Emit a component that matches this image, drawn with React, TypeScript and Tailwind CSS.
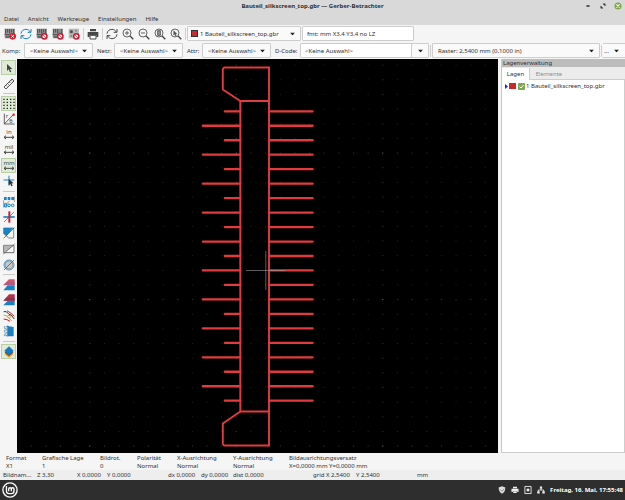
import type { ReactNode } from "react";

const RED = "#e23b3d";

type IconProps = { children: ReactNode; size?: string };

const Icon = ({ children, size = "size-3" }: IconProps) => (
  <svg viewBox="0 0 36 36" className={`${size} shrink-0 overflow-visible`} fill="none" aria-hidden="true">
    {children}
  </svg>
);

const Arrow = () => (
  <svg viewBox="0 0 10 6" className="pointer-events-none absolute right-[6px] top-1/2 h-[3px] w-[5px] -translate-y-1/2" aria-hidden="true">
    <path d="M0 0h10L5 6z" fill="#222" />
  </svg>
);

const ChipBody = () => (
  <>
    <path d="M2 2h31v29H2z" fill="#9a9a9a" />
    <path d="M5 3v14M11 3v11M17 3v14M23 3v11M29 3v14" stroke="#4a4a4a" strokeWidth="3" />
    <path d="M2 18h14v4H2zM5 25h11v4H5z" fill="#555" />
  </>
);

const NoEntry = () => (
  <>
    <circle cx="25" cy="25" r="8" fill="#fff" stroke="#d0142e" strokeWidth="4.5" />
    <path d="M19 19l12 12" stroke="#d0142e" strokeWidth="2" />
  </>
);

const ReloadArrows = ({ color }: { color: string }) => (
  <g stroke={color} strokeWidth="3">
    <path d="M3 17C4 8 11 4 18 4c6 0 10 3 13 8M33 19c-1 9-8 13-15 13-6 0-10-3-13-8" />
    <path d="M33 3v10H23M3 33V23h10" />
  </g>
);

const Lens = ({ children }: { children: ReactNode }) => (
  <g stroke="#444" strokeWidth="2.5">
    <circle cx="15" cy="15" r="12" />
    <path d="M24 24l10 10" strokeWidth="4" />
    {children}
  </g>
);

const fileTools = [
  {
    label: "Alle Lagen löschen",
    icon: (
      <>
        <ChipBody />
        <circle cx="26" cy="25" r="10" fill="#d3202f" />
        <path d="M22 21l8 8M30 21l-8 8" stroke="#fff" strokeWidth="3" />
      </>
    ),
  },
  { label: "Alle Lagen neu laden", icon: <ReloadArrows color="#1a81c4" /> },
  { label: "Gerber öffnen", icon: <><ChipBody /><NoEntry /></> },
  { label: "Gerber-Job öffnen", icon: <><ChipBody /><path d="M18 3h10v9H18z" fill="#888" /><NoEntry /></> },
  {
    label: "Bohrdatei öffnen",
    icon: (
      <>
        <path d="M2 2h31v29H2z" fill="#b9b9b9" />
        <circle cx="10" cy="11" r="5" fill="#555" />
        <circle cx="24" cy="8" r="3" fill="#888" />
        <circle cx="10" cy="24" r="3" fill="#888" />
        <NoEntry />
      </>
    ),
  },
];

const viewTools = [
  { label: "Ansicht aktualisieren", icon: <ReloadArrows color="#484848" /> },
  { label: "Vergrößern", icon: <Lens><path d="M9 15h12M15 9v12" /></Lens> },
  { label: "Verkleinern", icon: <Lens><path d="M9 15h12" /></Lens> },
  { label: "Zoom anpassen", icon: <Lens><path d="M11 8h8v14h-8z" fill="#999" /></Lens> },
  { label: "Auswahl zoomen", icon: <Lens><path d="M11 8l10 9-5 1 3 5-3 1-2-5-3 2z" fill="#555" strokeWidth="1" /></Lens> },
];

const Unit = ({ text }: { text: string }) => (
  <>
    <text x="18" y="16" textAnchor="middle" fontSize="18" fill="#444">{text}</text>
    <path d="M3 25h30M9 20l-6 5 6 5M27 20l6 5-6 5" stroke="#444" strokeWidth="3" />
  </>
);

const sideTools = [
  {
    height: "h-[31px]",
    tools: [
      { label: "Auswählen", on: true, icon: <path d="M12 6v21l5-5 4 9 4-2-4-8h7z" fill="#444" /> },
      {
        label: "Messen",
        icon: <path d="M3 27L27 3l6 6L9 33zM9 22l3 3M14 17l3 3M19 12l3 3M24 7l3 3" stroke="#333" strokeWidth="2.5" />,
      },
    ],
  },
  {
    height: "h-[93px]",
    tools: [
      {
        label: "Raster anzeigen",
        on: true,
        icon: <path d="M1 4h34M1 13h34M1 22h34M1 31h34" stroke="#222" strokeWidth="4" strokeDasharray="4 6" />,
      },
      {
        label: "Polarkoordinaten",
        icon: (
          <>
            <path d="M4 2v31h31M4 33L30 6" stroke="#444" strokeWidth="2.5" />
            <text x="8" y="16" fontSize="18" fill="#444">r</text>
            <text x="19" y="30" fontSize="17" fill="#444">θ</text>
            <circle cx="32" cy="5" r="3.5" fill="#d3202f" />
          </>
        ),
      },
      { label: "Zoll", icon: <Unit text="in" /> },
      { label: "Mil", icon: <Unit text="mil" /> },
      { label: "Millimeter", on: true, icon: <Unit text="mm" /> },
      {
        label: "Fadenkreuz",
        icon: (
          <>
            <path d="M18 2v30M2 15h32" stroke="#1a81c4" strokeWidth="3" />
            <path d="M17 12v19l5-4 3 7 4-2-3-7h6z" fill="#333" />
          </>
        ),
      },
    ],
  },
  {
    height: "h-[78px]",
    tools: [
      {
        label: "Komponenten hervorheben",
        icon: (
          <>
            <path d="M3 3h8v9H3zM14 3h8v9h-8zM25 3h8v9h-8z" fill="#1a81c4" />
            <path d="M2 13v21M34 2v16M3 32L20 14" stroke="#666" strokeWidth="2" />
            <circle cx="18" cy="28" r="4" stroke="#1a81c4" strokeWidth="3" />
            <circle cx="29" cy="28" r="4" stroke="#1a81c4" strokeWidth="3" />
            <path d="M5 23h6v10H5z" stroke="#1a81c4" strokeWidth="3" />
          </>
        ),
      },
      {
        label: "Netze hervorheben",
        icon: (
          <>
            <path d="M1 18h34" stroke="#1a81c4" strokeWidth="5" />
            <path d="M19 1v34" stroke="#c8203f" strokeWidth="6" />
            <path d="M3 33L33 3" stroke="#555" strokeWidth="2" />
          </>
        ),
      },
      {
        label: "Attribute hervorheben",
        icon: (
          <>
            <path d="M2 3h30v30H17L2 20z" stroke="#555" strokeWidth="2" fill="#f5f5f5" />
            <path d="M2 3h28L11 26 2 20z" fill="#1a81c4" />
            <path d="M2 34L34 2" stroke="#444" strokeWidth="2" />
          </>
        ),
      },
      {
        label: "Linien skizzieren",
        icon: (
          <>
            <path d="M2 7h31v22H2z" stroke="#555" strokeWidth="2.5" fill="#f5f5f5" />
            <path d="M3 8h28L5 28H3z" fill="#b5b5b5" />
            <path d="M1 33L35 3" stroke="#444" strokeWidth="2" />
          </>
        ),
      },
      {
        label: "Flächen skizzieren",
        icon: (
          <>
            <circle cx="18" cy="18" r="15" fill="#c6cacd" stroke="#4f9cd0" strokeWidth="3" />
            <circle cx="18" cy="18" r="12" stroke="#888" strokeWidth="2" />
            <path d="M3 33L33 3" stroke="#444" strokeWidth="2" />
          </>
        ),
      },
    ],
  },
  {
    height: "h-[62px]",
    tools: [
      {
        label: "Differenzmodus",
        icon: (
          <>
            <path d="M18 1L35 1v17H1z" fill="#d4566a" />
            <path d="M14 19h21v15H1z" fill="#1a81c4" />
            <path d="M11 10h24v9H1z" fill="#ad5d85" />
          </>
        ),
      },
      {
        label: "Kontrastmodus",
        icon: (
          <>
            <path d="M18 1h17v19H1z" fill="#b8304c" />
            <path d="M14 20h21v14H1z" fill="#1a81c4" />
            <path d="M11 11h24v9H1z" fill="#8c3350" />
          </>
        ),
      },
      {
        label: "Negative Objekte",
        icon: (
          <>
            <path d="M2 5h8l8 8 6 2 10 12" stroke="#333" strokeWidth="3" />
            <path d="M12 2l12 8 10 9M2 27l10 2 9 5" stroke="#d3202f" strokeWidth="3" />
            <path d="M2 15l12 4 12 14" stroke="#e79424" strokeWidth="3" />
            <circle cx="18" cy="20" r="4" fill="#fff" stroke="#e79424" strokeWidth="3" />
          </>
        ),
      },
      {
        label: "Ansicht spiegeln",
        icon: (
          <>
            <path d="M14 3l18 3v28H14z" fill="#1a81c4" />
            <path d="M13 5H4v5h6v6H4v5h6v6H4v5h9" stroke="#5d8fb2" strokeWidth="3" strokeDasharray="5 2" />
            <path d="M14 1v34" stroke="#555" strokeWidth="2" />
          </>
        ),
      },
    ],
  },
  {
    height: "h-[15px]",
    tools: [
      {
        label: "Lagenverwaltung anzeigen",
        on: true,
        icon: (
          <>
            <path d="M18 14l14 10-14 11L4 24z" fill="#ef9a21" />
            <path d="M18 8l13 11-13 11L5 19z" fill="#444" />
            <path d="M18 1l14 13-14 14L4 14z" fill="#1a78c2" />
          </>
        ),
      },
    ],
  },
];

const messages = [
  { name: "Format", value: "X1", width: "w-9" },
  { name: "Grafische Lage", value: "1", width: "w-[58px]" },
  { name: "Bildrot.", value: "0", width: "w-[37px]" },
  { name: "Polarität", value: "Normal", width: "w-10" },
  { name: "X-Ausrichtung", value: "Normal", width: "w-14" },
  { name: "Y-Ausrichtung", value: "Normal", width: "w-14" },
  { name: "Bildausrichtungsversatz", value: "X=0,0000 mm Y=0,0000 mm", width: "w-28" },
];

const ToolButton = ({ label, children }: { label: string; children: ReactNode }) => (
  <button type="button" aria-label={label} className="flex h-4 w-4 items-center justify-center">
    <Icon>{children}</Icon>
  </button>
);

const Divider = () => <span className="mx-px h-3 w-px shrink-0 bg-[#cfcfcf]" />;

const Picker = ({ id, label, width }: { id: string; label: string; width: string }) => (
  <>
    <label htmlFor={id} className={`${width} shrink-0`}>{label}</label>
    <div className="relative mr-[4px] h-[15px] w-[69px] shrink-0">
      <select id={id} className="h-full w-full appearance-none rounded-[1px] border border-[#cdcdcd] bg-[#fafafa] pl-[5px]">
        <option>&lt;Keine Auswahl&gt;</option>
      </select>
      <Arrow />
    </div>
  </>
);

// Grid dots are 14.65 apart, every tenth one is brighter
const columns = Array.from({ length: 33 }, (_, i) => 31.2 + i * 14.65);
const rows = Array.from({ length: 27 }, (_, i) => 65.2 + i * 14.65);
const pins = Array.from({ length: 21 }, (_, i) => 111.3 + i * 14.47);

const Board = () => (
  <svg viewBox="17 59 481 394" className="block h-full w-full" role="img" aria-label="Bauteil_silkscreen_top">
    {rows.map((y, r) =>
      columns.map((x, c) => (
        <rect
          key={`${r}-${c}`}
          x={x - 0.5}
          y={y - 0.5}
          width="1"
          height="1"
          fill={r % 10 === 6 && c % 10 === 4 ? "#777" : r % 10 === 6 || c % 10 === 4 ? "#3c3c3c" : "#242424"}
        />
      ))
    )}
    <g stroke={RED} strokeWidth="1.9" fill="none" strokeLinecap="round" strokeLinejoin="round">
      <path d="M269 67.5H224L222.8 69V89.5L240.3 101H269" />
      <path d="M269 445.5H224L222.8 444V423.5L240.3 411.5H269" />
      <path d="M240.3 101V411.5M269 67.5V445.5" />
      {pins.map((y, i) => (
        <path key={y} d={`M${i % 2 ? 202.8 : 224.8} ${y}H240.3M269 ${y}H312.6`} strokeWidth="2.3" />
      ))}
    </g>
    <path d="M246 270.5h39M265.8 251v39" stroke="#999" strokeOpacity="0.6" />
  </svg>
);

const App = () => {
  return (
    <div className="flex h-screen flex-col overflow-hidden bg-[#f5f5f5] font-['Noto_Sans',sans-serif] text-[6px] leading-[8px] text-[#303030]">
      {/* Title bar */}
      <header className="relative flex h-3 shrink-0 items-center justify-center bg-[#d9d9d9] font-bold">
        <h1>Bauteil_silkscreen_top.gbr — Gerber-Betrachter</h1>
        <div className="absolute right-[3px] top-[2px] flex gap-[7px]">
          <button type="button" aria-label="Minimieren">
            <Icon size="size-2"><path d="M11 18h14" stroke="#333" strokeWidth="7" /></Icon>
          </button>
          <button type="button" aria-label="Wiederherstellen">
            <Icon size="size-2"><path d="M18 8h10v10zM8 18v10h10z" fill="#333" stroke="#333" strokeWidth="2" /></Icon>
          </button>
          <button type="button" aria-label="Schließen">
            <Icon size="size-2">
              <circle cx="18" cy="18" r="16" fill="#7faa4e" />
              <path d="M11 11l14 14M25 11L11 25" stroke="#fff" strokeWidth="5" />
            </Icon>
          </button>
        </div>
      </header>

      {/* Menu */}
      <nav className="flex h-[13px] shrink-0 items-center gap-[9px] bg-[#d9d9d9] pl-1">
        <button type="button">Datei</button>
        <button type="button">Ansicht</button>
        <button type="button">Werkzeuge</button>
        <button type="button">Einstellungen</button>
        <button type="button">Hilfe</button>
      </nav>

      {/* Main toolbar */}
      <div className="flex h-[17px] shrink-0 items-center pl-[2px]">
        {fileTools.map((tool) => (
          <ToolButton key={tool.label} label={tool.label}>{tool.icon}</ToolButton>
        ))}
        <Divider />
        <ToolButton label="Drucken">
          <path d="M9 3h18v7H9zM2 12h32v15h-6v-6H8v6H2z" fill="#484848" />
          <path d="M9 22h18v11H9z" stroke="#484848" strokeWidth="3" fill="#fff" />
        </ToolButton>
        <Divider />
        {viewTools.map((tool) => (
          <ToolButton key={tool.label} label={tool.label}>{tool.icon}</ToolButton>
        ))}
        <Divider />
        <div className="relative h-[15px] w-[114px] shrink-0">
          <span className="absolute left-[4px] top-[4px] size-[7px] border border-[#333] bg-[#c92a2f]" />
          <select aria-label="Aktive Lage" className="h-full w-full appearance-none rounded-[1px] border border-[#cdcdcd] bg-[#fafafa] pl-[12px]">
            <option>1 Bauteil_silkscreen_top.gbr</option>
          </select>
          <Arrow />
        </div>
        <input
          aria-label="Dateiformat"
          readOnly
          value="fmt: mm X3.4 Y3.4 no LZ"
          className="ml-px h-[15px] w-28 rounded-[1px] border border-[#cdcdcd] bg-white pl-[4px]"
        />
      </div>

      {/* Selection toolbar */}
      <div className="flex h-[17px] shrink-0 items-center pl-[2px]">
        <Picker id="komp" label="Komp:" width="w-[22px]" />
        <Picker id="netz" label="Netz:" width="w-[17px]" />
        <Picker id="attr" label="Attr:" width="w-[15px]" />
        <label htmlFor="dcode" className="w-[25px] shrink-0">D-Code:</label>
        <div className="relative h-[15px] w-[129px] shrink-0">
          <select id="dcode" className="h-full w-full appearance-none rounded-[1px] border border-[#cdcdcd] bg-white pl-[4px]">
            <option>&lt;Keine Auswahl&gt;</option>
          </select>
          <span className="pointer-events-none absolute inset-y-px right-px w-[17px] border-l border-[#cdcdcd] bg-[#fafafa]" />
          <Arrow />
        </div>
        <Divider />
        <div className="relative h-[15px] min-w-0 flex-1">
          <select aria-label="Raster" className="h-full w-full appearance-none rounded-[1px] border border-[#cdcdcd] bg-[#fafafa] pl-[5px]">
            <option>Raster: 2,5400 mm (0,1000 in)</option>
          </select>
          <Arrow />
        </div>
        <Divider />
        <div className="relative h-[15px] w-[22px] shrink-0">
          <select aria-label="Zoom" className="h-full w-full appearance-none border-y border-[#cdcdcd] bg-[#fafafa] pl-px">
            <option>...</option>
          </select>
          <Arrow />
        </div>
      </div>

      <main className="flex min-h-0 flex-1">
        <aside className="flex w-[17px] shrink-0 flex-col items-center pt-px">
          {sideTools.map((group, i) => (
            <div key={group.height} className="flex flex-col items-center">
              {i > 0 && <span className="my-[2px] h-px w-3 bg-[#c8c8c8]" />}
              <div className={`flex flex-col justify-between ${group.height}`}>
                {group.tools.map((tool) => (
                  <button
                    key={tool.label}
                    type="button"
                    aria-label={tool.label}
                    className={`flex size-[15px] items-center justify-center border ${"on" in tool && tool.on ? "border-[#b9cfa5] bg-[#dfebd4]" : "border-transparent"}`}
                  >
                    <Icon>{tool.icon}</Icon>
                  </button>
                ))}
              </div>
            </div>
          ))}
        </aside>

        <section className="min-w-0 flex-1 bg-black">
          <Board />
        </section>

        {/* Layer manager */}
        <section className="ml-[3px] flex w-[124px] shrink-0 flex-col border-l border-[#c8c8c8] bg-[#ececec]">
          <h2 className="h-2 bg-[#bcbcbc] pl-px">Lagenverwaltung</h2>
          <div role="tablist" className="flex h-[13px] pt-px text-[#8c8c8c]">
            <button type="button" role="tab" aria-selected="true" className="w-7 border-r border-[#cdcdcd] bg-white text-[#303030]">Lagen</button>
            <button type="button" role="tab" aria-selected="false" className="w-[38px] border-b border-[#cdcdcd]">Elemente</button>
            <span className="flex-1 border-b border-[#cdcdcd]" />
          </div>
          <div className="flex-1 border-b border-r border-[#cdcdcd] bg-white pl-[3px] pt-[2px]">
            <label className="flex items-center">
              <svg viewBox="0 0 3 5" className="h-[5px] w-[3px]" aria-hidden="true">
                <path d="M0 0l3 2.5L0 5z" fill="#2020f0" />
              </svg>
              <span className="ml-px h-[6px] w-[7px] bg-[#c92a2f]" />
              <span className="relative ml-[2px] size-[7px]">
                <input type="checkbox" defaultChecked className="block size-[7px] appearance-none rounded-[1px] bg-[#7fa653]" />
                <svg viewBox="0 0 7 7" className="pointer-events-none absolute inset-0 size-[7px]" fill="none" aria-hidden="true">
                  <path d="M1.5 3.5L3 5l2.6-3" stroke="#fff" />
                </svg>
              </span>
              <span className="ml-px whitespace-nowrap">1 Bauteil_silkscreen_top.gbr</span>
            </label>
          </div>
        </section>
      </main>

      {/* Message panel */}
      <dl className="flex h-[17px] shrink-0 pl-[6px] pt-px">
        {messages.map((item) => (
          <div key={item.name} className={`${item.width} shrink-0 whitespace-nowrap`}>
            <dt>{item.name}</dt>
            <dd>{item.value}</dd>
          </div>
        ))}
      </dl>
      <footer className="flex h-[10px] shrink-0 items-center whitespace-nowrap bg-[#eeeeee] pl-[3px]">
        <span className="w-[34px]">Bildnam...</span>
        <span className="w-10">Z 3,30</span>
        <span className="w-[30px]">X 0,0000</span>
        <span className="w-[61px]">Y 0,0000</span>
        <span className="w-[33px]">dx 0,0000</span>
        <span className="w-8">dy 0,0000</span>
        <span className="w-20">dist 0,0000</span>
        <span className="w-[43px]">grid X 2,5400</span>
        <span className="w-[61px]">Y 2,5400</span>
        <span>mm</span>
      </footer>

      {/* Desktop panel */}
      <div className="flex h-5 shrink-0 items-center justify-between bg-[#2e2e2e] pl-[2px] pr-[2px] text-white">
        <button type="button" aria-label="Menü">
          <Icon size="size-4">
            <circle cx="18" cy="18" r="16" stroke="#fff" strokeWidth="3" />
            <path d="M10 9v11q0 6 6 6h5q6 0 6-6v-4q0-3-3-3t-3 3v5M21 16q0-3-3-3t-3 3v5" stroke="#fff" strokeWidth="3" />
          </Icon>
        </button>
        <div className="flex items-center gap-[5px]">
          <Icon size="size-2">
            <path d="M18 1l15 6c0 15-6 23-15 28C9 30 3 22 3 7z" fill="#ddd" />
            <path d="M10 15l8 9 10-12" stroke="#888" strokeWidth="4" />
          </Icon>
          <Icon size="size-2">
            <path d="M9 3h18v7H9zM2 12h32v15h-6v-5H8v5H2zM10 24h16v8H10z" fill="#eee" />
          </Icon>
          <Icon size="size-2">
            <path d="M4 2h28v32H4z" stroke="#eee" strokeWidth="4" />
            <path d="M12 12h12v12H12z" fill="#eee" />
          </Icon>
          <Icon size="size-2">
            <path d="M13 2h10v10H13zM1 24h11v10H1zM24 24h11v10H24z" fill="#eee" />
            <path d="M18 12v6M6 25v-7h24v7" stroke="#eee" strokeWidth="4" />
          </Icon>
          <time className="font-bold">Freitag, 16. Mai, 17:55:48</time>
        </div>
      </div>
    </div>
  );
};

export default App;
